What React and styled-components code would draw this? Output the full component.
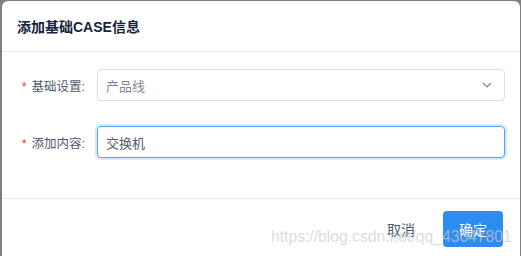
import styled, { createGlobalStyle } from 'styled-components';

const GlobalStyle = createGlobalStyle`
    html, body {
        margin: 0;
        padding: 0;
        background: #7f7f7f;
        font-family: "Liberation Sans", "Noto Sans CJK SC", sans-serif;
    }
`

// the visible modal card
const Page = styled.div`
    position: relative;
    width: 521px;
    height: 256px;
    overflow: hidden;
    padding: 1px 1px 0 2px;
    box-sizing: border-box;
`

const Modal = styled.div`
    background: #fff;
    border-radius: 6px;
    height: 280px;
`

const Header = styled.div`
    height: 50px;
    display: flex;
    align-items: center;
    padding: 0 15px;
    border-bottom: 1px solid #e8eaec;

    h1 {
        margin: 0;
        font-size: 14px;
        font-weight: 700;
        color: #17233d;
    }
`

const Body = styled.div`
    padding: 17px 15px 40px;
    display: flex;
    flex-direction: column;
    gap: 25px;
`

const FormRow = styled.div`
    display: flex;
    align-items: center;
`

const Label = styled.label`
    width: 80px;
    flex: none;
    box-sizing: border-box;
    padding-right: 12px;
    text-align: right;
    font-size: 12.5px;
    color: #515a6e;

    &::before {
        content: '*';
        color: #ed4014;
        margin-right: 5px;
        font-family: "Liberation Sans", sans-serif;
    }
`

const Field = styled.div`
    flex: 1;
    height: 32px;
    box-sizing: border-box;
    border-radius: 4px;
    border: 1px solid ${({ focused }) => (focused ? '#57a3f3' : '#dcdee2')};
    box-shadow: ${({ focused }) => (focused ? '0 0 0 2px rgba(45,140,240,.2)' : 'none')};
    display: flex;
    align-items: center;
    justify-content: space-between;
    padding: 0 12px 0 8px;
    font-size: 13px;
    color: ${({ placeholder }) => (placeholder ? '#808695' : '#515a6e')};
`

const Footer = styled.div`
    border-top: 1px solid #e8eaec;
    padding: 12px 17px;
    display: flex;
    justify-content: flex-end;
    gap: 12px;
`

const Button = styled.button`
    width: 60px;
    height: 36px;
    border-radius: 4px;
    border: none;
    font-family: inherit;
    font-size: 14px;
    background: ${({ primary }) => (primary ? '#2d8cf0' : 'transparent')};
    color: ${({ primary }) => (primary ? '#fff' : '#515a6e')};
`

// csdn watermark laid over the footer
const Watermark = styled.div`
    position: absolute;
    left: 271px;
    top: 228px;
    font-size: 15.7px;
    color: rgba(205, 205, 205, 0.7);
    white-space: nowrap;
    pointer-events: none;
`

const Chevron = () => (
    <svg width="10" height="6" viewBox="0 0 10 6" fill="none">
        <path d="M1 1l4 4 4-4" stroke="#808695" strokeWidth="1.2" />
    </svg>
)

const App = () => {
    return (
        <Page>
            <GlobalStyle />
            <Modal>
                <Header>
                    <h1>添加基础CASE信息</h1>
                </Header>

                <Body>
                    <FormRow>
                        <Label>基础设置:</Label>
                        <Field placeholder>
                            产品线
                            <Chevron />
                        </Field>
                    </FormRow>

                    <FormRow>
                        <Label>添加内容:</Label>
                        <Field focused>交换机</Field>
                    </FormRow>
                </Body>

                <Footer>
                    <Button>取消</Button>
                    <Button primary>确定</Button>
                </Footer>
            </Modal>
            <Watermark>https://blog.csdn.net/qq_43047801</Watermark>
        </Page>
    );
}

export default App;
